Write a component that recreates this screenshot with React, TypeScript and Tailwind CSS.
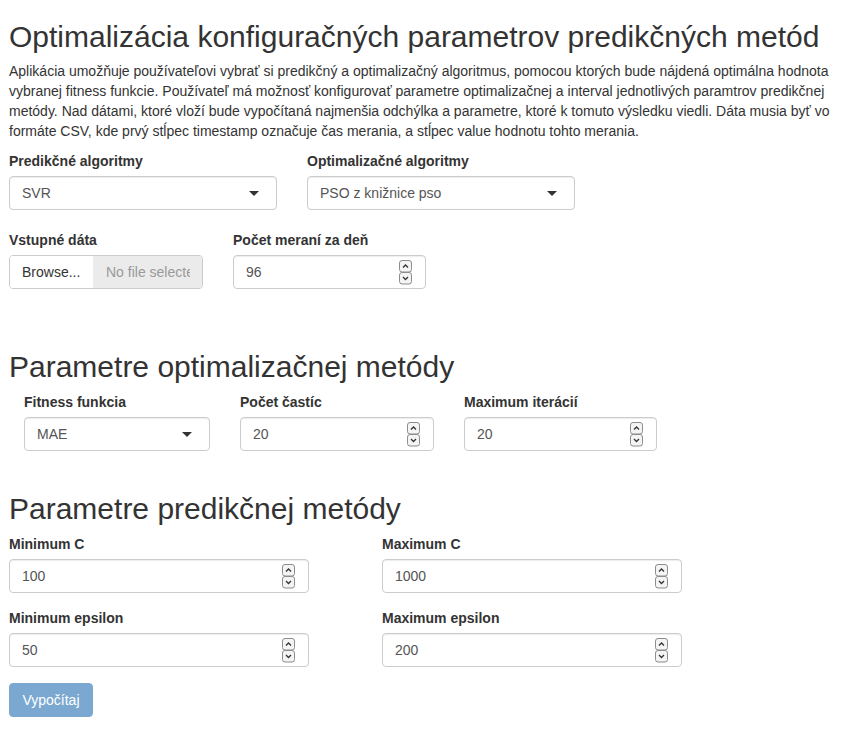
import React from 'react';

const fieldBase =
  'h-[34px] flex items-center border border-[#ccc] rounded-[4px] bg-white shadow-[inset_0_1px_1px_rgba(0,0,0,0.075)] text-[#555]';

function Label({ children }: { children: React.ReactNode }) {
  return <div className="font-bold mb-[5px] h-[20px]">{children}</div>;
}

function SelectBox({ value, width }: { value: string; width: string }) {
  return (
    <div className={`${fieldBase} ${width} justify-between pl-[12px] pr-[17px]`}>
      <span>{value}</span>
      <svg width="10" height="5" viewBox="0 0 10 5">
        <polygon points="0,0 10,0 5,5" fill="#333" />
      </svg>
    </div>
  );
}

function Spinner() {
  return (
    <svg width="13" height="25" viewBox="0 0 13 25" className="shrink-0">
      <rect x="0.5" y="0.5" width="12" height="11.5" rx="2.5" fill="#f4f4f4" stroke="#8c8c8c" />
      <rect x="0.5" y="12.5" width="12" height="11.5" rx="2.5" fill="#f4f4f4" stroke="#8c8c8c" />
      <path d="M4 7.5 L6.5 5 L9 7.5" fill="none" stroke="#333" strokeWidth="1.3" />
      <path d="M4 17 L6.5 19.5 L9 17" fill="none" stroke="#333" strokeWidth="1.3" />
    </svg>
  );
}

function NumberBox({ value, width }: { value: string; width: string }) {
  return (
    <div className={`${fieldBase} ${width} justify-between pl-[12px] pr-[13px]`}>
      <span>{value}</span>
      <Spinner />
    </div>
  );
}

function FileBox() {
  return (
    <div className="h-[34px] w-[194px] flex border border-[#ccc] rounded-[4px] overflow-hidden">
      <div className="w-[83px] flex items-center pl-[12px] bg-white text-[#333]">Browse...</div>
      <div className="flex-1 min-w-0 flex items-center pl-[13px] pr-[12px] bg-[#ebebeb] text-[#999]">
        <span className="block overflow-hidden whitespace-nowrap">No file selected.</span>
      </div>
    </div>
  );
}

export default function App() {
  return (
    <div className="px-[9px] pb-[20px] bg-white text-[#333] text-[14px] leading-[20px] font-['Liberation_Sans',Arial,sans-serif]">
      <h1 className="text-[30px] leading-[33px] font-normal mt-[20px] mb-[8px]">
        Optimalizácia konfiguračných parametrov predikčných metód
      </h1>
      <p className="mb-[10px]">
        Aplikácia umožňuje používateľovi vybrať si predikčný a optimalizačný algoritmus, pomocou ktorých bude nájdená optimálna hodnota
        vybranej fitness funkcie. Používateľ má možnosť konfigurovať parametre optimalizačnej a interval jednotlivých paramtrov predikčnej
        metódy. Nad dátami, ktoré vloží bude vypočítaná najmenšia odchýlka a parametre, ktoré k tomuto výsledku viedli. Dáta musia byť vo
        formáte CSV, kde prvý stĺpec timestamp označuje čas merania, a stĺpec value hodnotu tohto merania.
      </p>

      <div className="flex gap-[30px] mb-[20px]">
        <div>
          <Label>Predikčné algoritmy</Label>
          <SelectBox value="SVR" width="w-[268px]" />
        </div>
        <div>
          <Label>Optimalizačné algoritmy</Label>
          <SelectBox value="PSO z knižnice pso" width="w-[268px]" />
        </div>
      </div>

      <div className="flex gap-[30px]">
        <div>
          <Label>Vstupné dáta</Label>
          <FileBox />
        </div>
        <div>
          <Label>Počet meraní za deň</Label>
          <NumberBox value="96" width="w-[193px]" />
        </div>
      </div>

      <h2 className="text-[30px] leading-[33px] font-normal mt-[61px] mb-[9px]">Parametre optimalizačnej metódy</h2>
      <div className="flex gap-[30px] pl-[15px]">
        <div>
          <Label>Fitness funkcia</Label>
          <SelectBox value="MAE" width="w-[186px]" />
        </div>
        <div>
          <Label>Počet častíc</Label>
          <NumberBox value="20" width="w-[194px]" />
        </div>
        <div>
          <Label>Maximum iterácií</Label>
          <NumberBox value="20" width="w-[193px]" />
        </div>
      </div>

      <h2 className="text-[30px] leading-[33px] font-normal mt-[41px] mb-[9px]">Parametre predikčnej metódy</h2>
      <div className="flex gap-[73px] mb-[15px]">
        <div>
          <Label>Minimum C</Label>
          <NumberBox value="100" width="w-[300px]" />
        </div>
        <div>
          <Label>Maximum C</Label>
          <NumberBox value="1000" width="w-[300px]" />
        </div>
      </div>
      <div className="flex gap-[73px] mb-[16px]">
        <div>
          <Label>Minimum epsilon</Label>
          <NumberBox value="50" width="w-[300px]" />
        </div>
        <div>
          <Label>Maximum epsilon</Label>
          <NumberBox value="200" width="w-[300px]" />
        </div>
      </div>

      <button
        type="button"
        disabled
        className="h-[34px] w-[84px] px-[12px] rounded-[4px] border border-[#7aa6cc] bg-[#7aa8d1] text-white text-[14px] leading-[20px]"
      >
        Vypočítaj
      </button>
    </div>
  );
}
